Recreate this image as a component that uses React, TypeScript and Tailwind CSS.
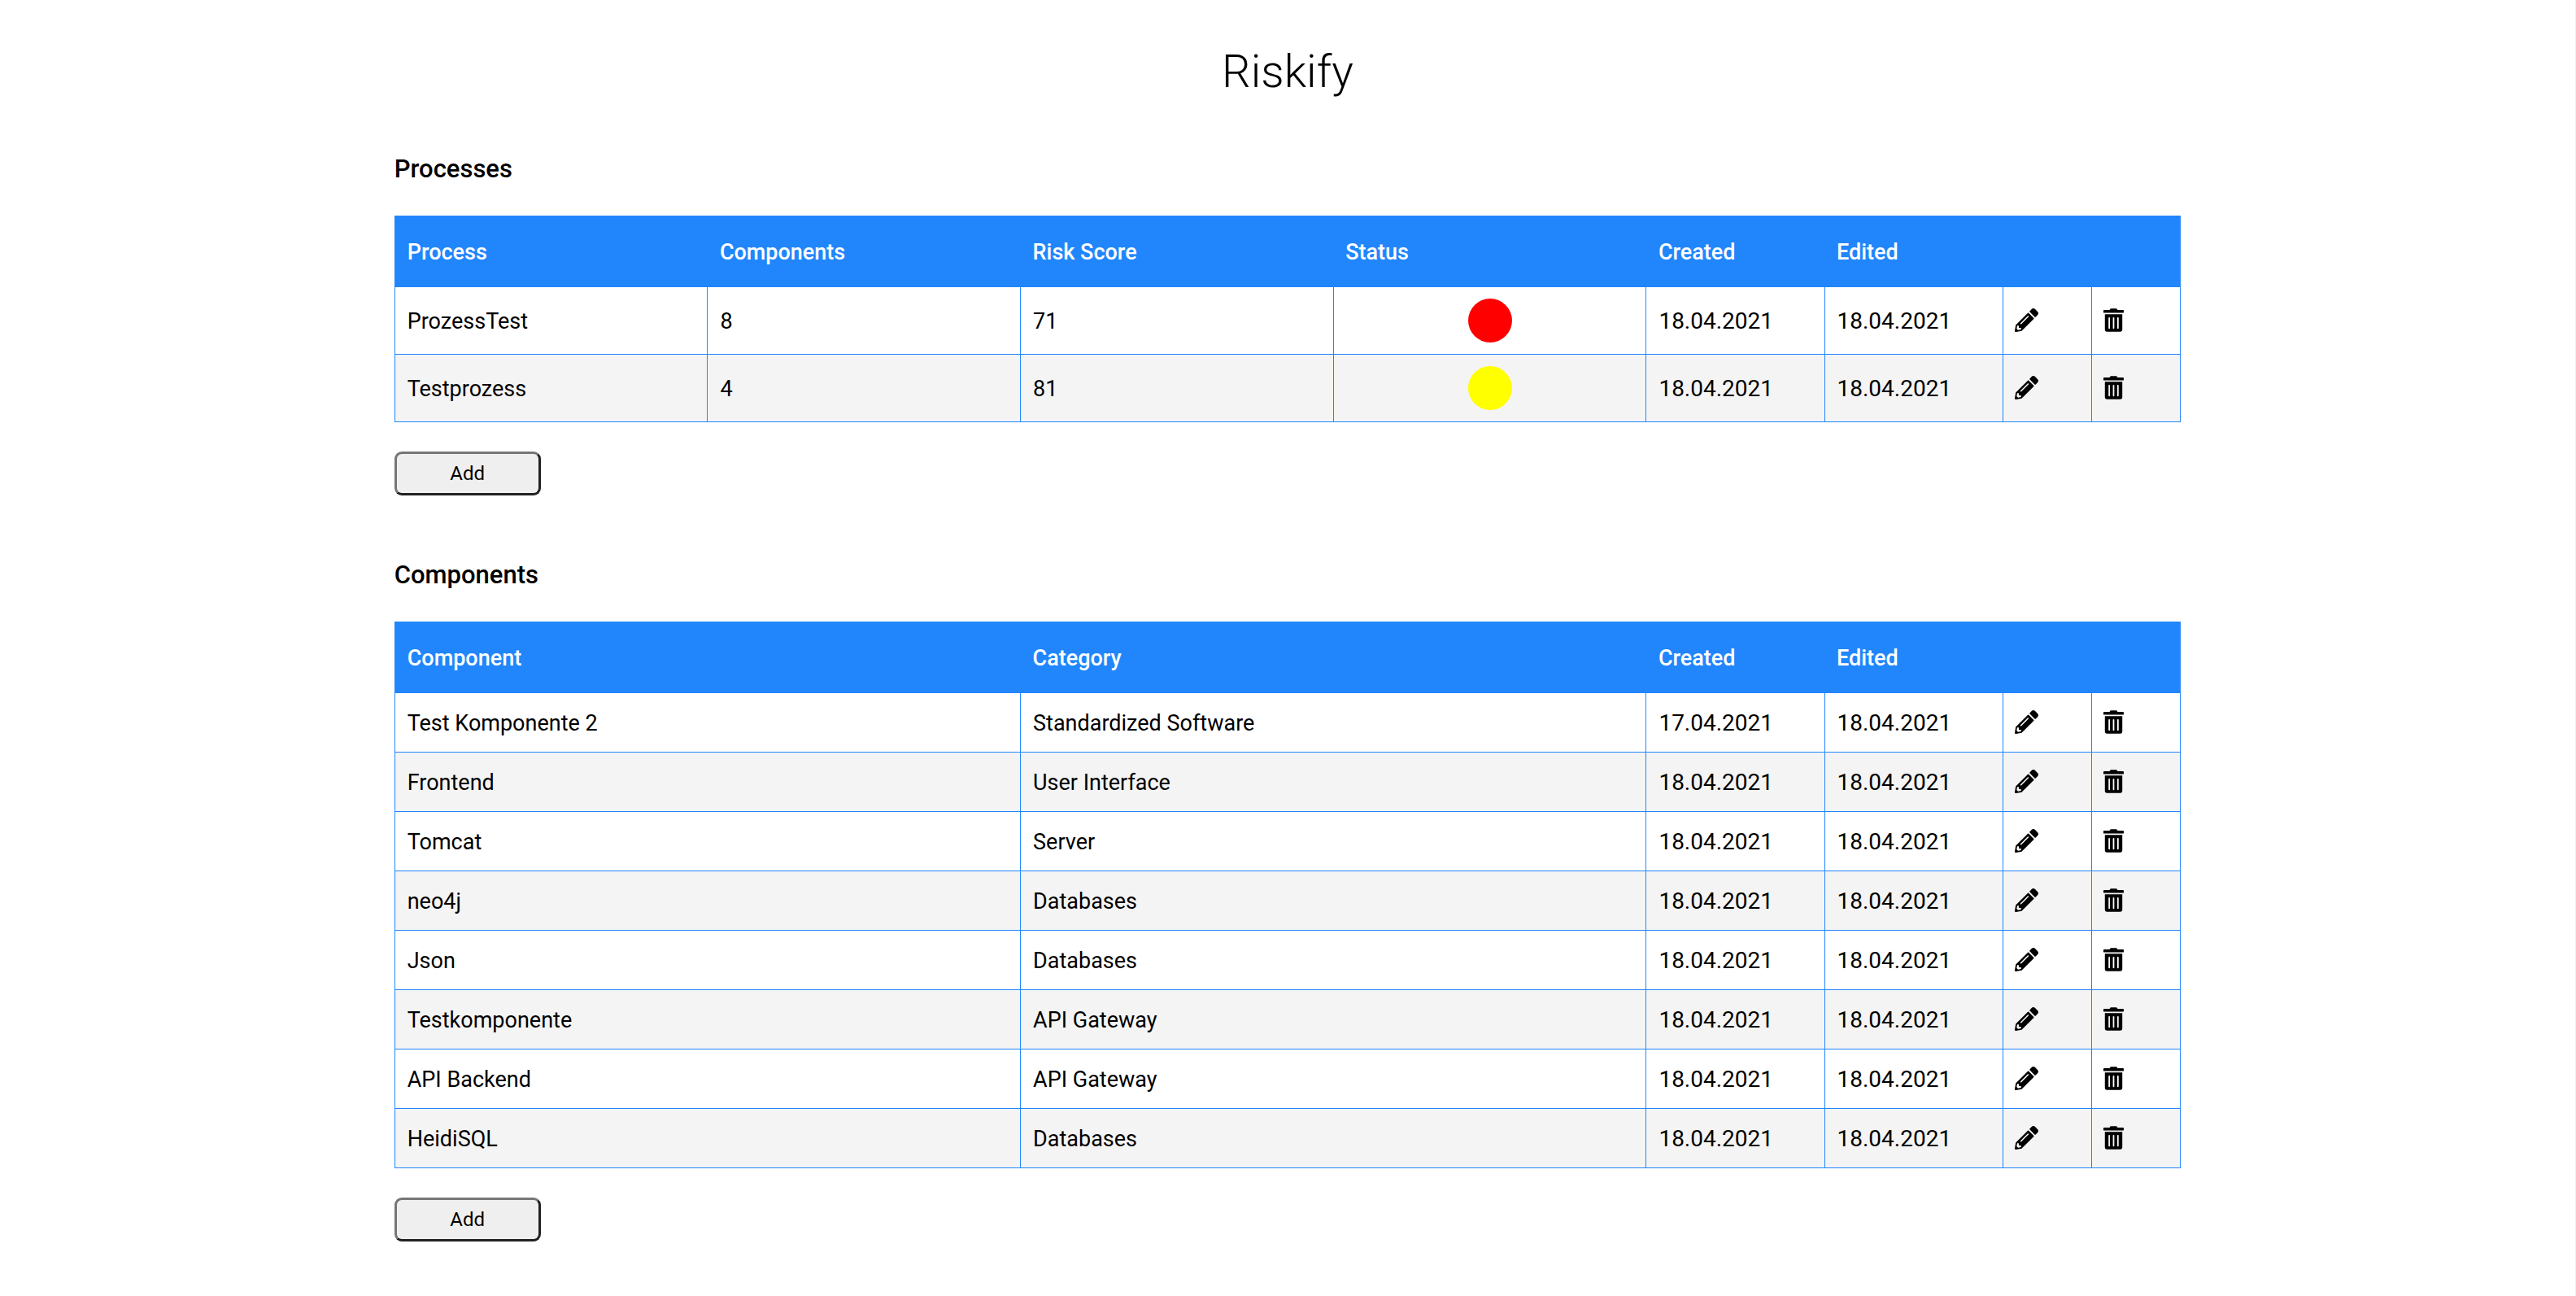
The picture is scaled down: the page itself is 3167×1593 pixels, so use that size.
import { FaPencilAlt, FaTrashAlt } from "react-icons/fa";

type Process = { name: string; components: number; score: number; status: "high" | "medium"; created: string; edited: string };
type Component = { name: string; category: string; created: string; edited: string };

const processes: Process[] = [
  { name: "ProzessTest", components: 8, score: 71, status: "high", created: "18.04.2021", edited: "18.04.2021" },
  { name: "Testprozess", components: 4, score: 81, status: "medium", created: "18.04.2021", edited: "18.04.2021" },
];

const components: Component[] = [
  { name: "Test Komponente 2", category: "Standardized Software", created: "17.04.2021", edited: "18.04.2021" },
  { name: "Frontend", category: "User Interface", created: "18.04.2021", edited: "18.04.2021" },
  { name: "Tomcat", category: "Server", created: "18.04.2021", edited: "18.04.2021" },
  { name: "neo4j", category: "Databases", created: "18.04.2021", edited: "18.04.2021" },
  { name: "Json", category: "Databases", created: "18.04.2021", edited: "18.04.2021" },
  { name: "Testkomponente", category: "API Gateway", created: "18.04.2021", edited: "18.04.2021" },
  { name: "API Backend", category: "API Gateway", created: "18.04.2021", edited: "18.04.2021" },
  { name: "HeidiSQL", category: "Databases", created: "18.04.2021", edited: "18.04.2021" },
];

const statusColor = { high: "bg-[#ff0000]", medium: "bg-[#ffff00]" };

const table = "w-full table-fixed border-collapse border border-[#2186fc] text-left text-[27px] leading-11 font-normal";
const headRow = "h-[87px] bg-[#2186fc] text-white";
const headCell = "px-[15px] pt-0.5 font-medium";
const cell = "border border-[#2186fc] px-[15px] pt-[15px] pb-[13px]";
const dateCell = "border border-[#2186fc] px-[15px] pt-[15px] pb-[13px] text-[28px]";
const iconCell = "border border-[#2186fc] px-[14px] pt-3 pb-[14px]";

function Actions({ name }: { name: string }) {
  return (
    <>
      <td className={iconCell}>
        <button type="button" aria-label={`Edit ${name}`} className="block cursor-pointer">
          <FaPencilAlt className="size-[29px]" />
        </button>
      </td>
      <td className={iconCell}>
        <button type="button" aria-label={`Delete ${name}`} className="block cursor-pointer">
          <FaTrashAlt className="h-[29px] w-[25px]" />
        </button>
      </td>
    </>
  );
}

function AddButton({ label }: { label: string }) {
  return (
    <button
      type="button"
      aria-label={label}
      className="mt-9 block h-[54px] w-[180px] cursor-pointer rounded-[9px] border-3 border-t-[#767676] border-r-[#212121] border-b-[#212121] border-l-[#767676] bg-[#efefef] text-2xl font-normal"
    >
      Add
    </button>
  );
}

export default function App() {
  return (
    <div className="min-h-screen border-r border-[#f0f0f0] bg-white px-3.5 font-['Roboto','Open_Sans',sans-serif] font-light text-black">
      <main className="mx-auto w-[70%]">
        <h1 className="pt-13 text-center text-[56px] leading-18">Riskify</h1>

        <section aria-labelledby="processes-title" className="pt-[62px]">
          <h2 id="processes-title" className="mb-[35px] text-[31px] leading-11 font-medium">Processes</h2>
          <table className={table}>
            <colgroup>
              <col className="w-[17.52%]" />
              <col className="w-[17.52%]" />
              <col className="w-[17.52%]" />
              <col className="w-[17.52%]" />
              <col className="w-[9.98%]" />
              <col className="w-[9.98%]" />
              <col className="w-[4.98%]" />
              <col className="w-[4.98%]" />
            </colgroup>
            <thead>
              <tr className={headRow}>
                <th className={headCell}>Process</th>
                <th className={headCell}>Components</th>
                <th className={headCell}>Risk Score</th>
                <th className={headCell}>Status</th>
                <th className={headCell}>Created</th>
                <th className={headCell}>Edited</th>
                <td />
                <td />
              </tr>
            </thead>
            <tbody>
              {processes.map((p) => (
                <tr key={p.name} className="even:bg-[#f4f4f4]">
                  <td className={cell}>{p.name}</td>
                  <td className={cell}>{p.components}</td>
                  <td className={cell}>{p.score}</td>
                  <td className="border border-[#2186fc] py-3.5">
                    <div role="img" aria-label={`${p.status} risk`} className={`mx-auto size-[54px] rounded-full ${statusColor[p.status]}`} />
                  </td>
                  <td className={dateCell}>{p.created}</td>
                  <td className={dateCell}>{p.edited}</td>
                  <Actions name={p.name} />
                </tr>
              ))}
            </tbody>
          </table>
          <AddButton label="Add process" />
        </section>

        <section aria-labelledby="components-title" className="pt-19 pb-16">
          <h2 id="components-title" className="mb-[35px] text-[31px] leading-11 font-medium">Components</h2>
          <table className={table}>
            <colgroup>
              <col className="w-[35.04%]" />
              <col className="w-[35.04%]" />
              <col className="w-[9.98%]" />
              <col className="w-[9.98%]" />
              <col className="w-[4.98%]" />
              <col className="w-[4.98%]" />
            </colgroup>
            <thead>
              <tr className={headRow}>
                <th className={headCell}>Component</th>
                <th className={headCell}>Category</th>
                <th className={headCell}>Created</th>
                <th className={headCell}>Edited</th>
                <td />
                <td />
              </tr>
            </thead>
            <tbody>
              {components.map((c) => (
                <tr key={c.name} className="even:bg-[#f4f4f4]">
                  <td className={cell}>{c.name}</td>
                  <td className={cell}>{c.category}</td>
                  <td className={dateCell}>{c.created}</td>
                  <td className={dateCell}>{c.edited}</td>
                  <Actions name={c.name} />
                </tr>
              ))}
            </tbody>
          </table>
          <AddButton label="Add component" />
        </section>
      </main>
    </div>
  );
}
